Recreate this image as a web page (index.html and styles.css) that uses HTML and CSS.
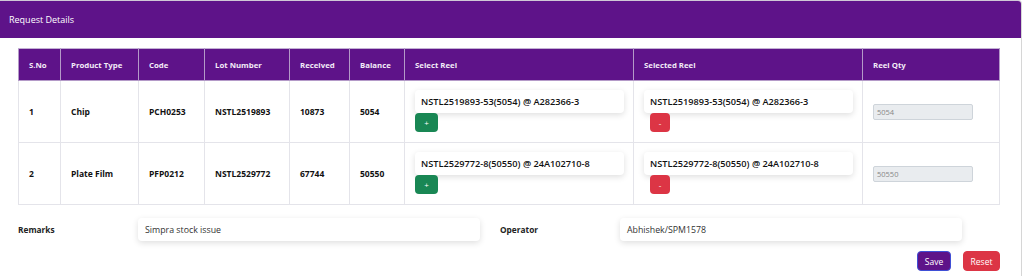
FILE: index.html
```html
<!DOCTYPE html>
<html>
<head>
<meta charset="utf-8">
<link rel="stylesheet" href="styles.css">
</head>
<body>
<div class="card">
  <div class="card-header">Request Details</div>
  <div class="card-body">
    <table class="grid">
      <colgroup>
        <col style="width:42px"><col style="width:78px"><col style="width:66px"><col style="width:85px"><col style="width:60px"><col style="width:55px"><col style="width:229px"><col style="width:229px"><col style="width:137px">
      </colgroup>
      <thead>
        <tr>
          <th>S.No</th><th>Product Type</th><th>Code</th><th>Lot Number</th><th>Received</th><th>Balance</th><th>Select Reel</th><th>Selected Reel</th><th>Reel Qty</th>
        </tr>
      </thead>
      <tbody>
        <tr class="row">
          <td>1</td><td>Chip</td><td>PCH0253</td><td>NSTL2519893</td><td>10873</td><td>5054</td>
          <td class="reel"><div class="reel-card">NSTL2519893-53(5054) @ A282366-3</div><button class="btn btn-add">+</button></td>
          <td class="reel"><div class="reel-card">NSTL2519893-53(5054) @ A282366-3</div><button class="btn btn-remove">-</button></td>
          <td><input class="qty" value="5054" disabled></td>
        </tr>
        <tr class="row">
          <td>2</td><td>Plate Film</td><td>PFP0212</td><td>NSTL2529772</td><td>67744</td><td>50550</td>
          <td class="reel"><div class="reel-card">NSTL2529772-8(50550) @ 24A102710-8</div><button class="btn btn-add">+</button></td>
          <td class="reel"><div class="reel-card">NSTL2529772-8(50550) @ 24A102710-8</div><button class="btn btn-remove">-</button></td>
          <td><input class="qty" value="50550" disabled></td>
        </tr>
      </tbody>
    </table>
    <div class="form-row">
      <label class="form-label">Remarks</label>
      <div class="form-field">Simpra stock issue</div>
      <label class="form-label">Operator</label>
      <div class="form-field">Abhishek/SPM1578</div>
    </div>
    <div class="actions">
      <button class="btn-save">Save</button>
      <button class="btn-reset">Reset</button>
    </div>
  </div>
</div>
</body>
</html>
```

FILE: styles.css
```css
html, body {
  margin: 0;
  padding: 0;
  background: #ffffff;
  font-family: "Open Sans", "Noto Sans", sans-serif;
  color: #212529;
}

.card {
  width: 1021px;
  border-top: 1px solid #cfc8d6;
  border-right: 1px solid #d6d6d6;
  border-top-right-radius: 4px;
  min-height: 275px;
}

.card-header {
  height: 37px;
  background: #5e1389;
  color: #ffffff;
  font-size: 9px;
  display: flex;
  align-items: center;
  padding-left: 9px;
  border-top-right-radius: 3px;
}

.card-body {
  padding: 10px 22px 0 18px;
}

.grid {
  border-collapse: collapse;
  table-layout: fixed;
  width: 981px;
  font-size: 8.5px;
}

.grid th {
  background: #5e1389;
  color: #f3ecf8;
  font-weight: 700;
  font-size: 7.8px;
  text-align: left;
  height: 31px;
  padding: 0 0 0 10px;
  border: 1px solid #b49ac8;
  border-top: 1px solid #c3b0d3;
}

.grid tr.row {
  height: 62px;
}

.grid td {
  border: 1px solid #e4e4ea;
  font-weight: 700;
  padding: 0 0 0 10px;
  vertical-align: middle;
  color: #111;
}

.grid td.reel {
  vertical-align: top;
  padding-top: 9px;
}

.reel-card {
  width: 203px;
  height: 23px;
  padding-left: 6px;
  display: flex;
  align-items: center;
  background: #fff;
  border-radius: 4px;
  box-shadow: 0 2px 6px rgba(0, 0, 0, 0.13);
  font-weight: 600;
  font-size: 9.2px;
  color: #111;
  white-space: nowrap;
}

.btn {
  display: block;
  border: none;
  border-radius: 4px;
  color: #fff;
  height: 19px;
  padding: 0;
  font-family: inherit;
  font-size: 8px;
  line-height: 19px;
  text-align: center;
}

.btn-add {
  width: 23px;
  background: #198754;
}

.btn-remove {
  width: 20px;
  margin-left: 6px;
  background: #dc3545;
}

.qty {
  box-sizing: border-box;
  width: 100px;
  height: 16px;
  border: 1px solid #ced4da;
  border-radius: 2px;
  background: #e9ecef;
  color: #888;
  font-family: inherit;
  font-size: 7.5px;
  padding: 0 3px;
  display: block;
}

.form-row {
  display: grid;
  grid-template-columns: 120px 342px 20px 120px 342px;
  align-items: center;
  margin-top: 13px;
  height: 23px;
}

.form-row .form-label:nth-of-type(2) {
  grid-column: 4;
}

.form-label {
  font-weight: 700;
  font-size: 8.3px;
  color: #222;
}

.form-field {
  height: 23px;
  display: flex;
  align-items: center;
  padding-left: 7px;
  border-radius: 4px;
  background: #fff;
  box-shadow: 0 2px 6px rgba(0, 0, 0, 0.13);
  font-size: 8.8px;
  color: #333;
}

.actions {
  display: flex;
  justify-content: flex-end;
  gap: 12px;
  margin-top: 10px;
  width: 982px;
}

.btn-save, .btn-reset {
  height: 20px;
  border-radius: 4px;
  color: #fff;
  font-family: inherit;
  font-size: 8.5px;
  padding: 0;
}

.btn-save {
  width: 34px;
  background: #5e1389;
  border: 1px solid #3f4fd6;
}

.btn-reset {
  width: 37px;
  background: #dc3545;
  border: 1px solid #dc3545;
}
```
